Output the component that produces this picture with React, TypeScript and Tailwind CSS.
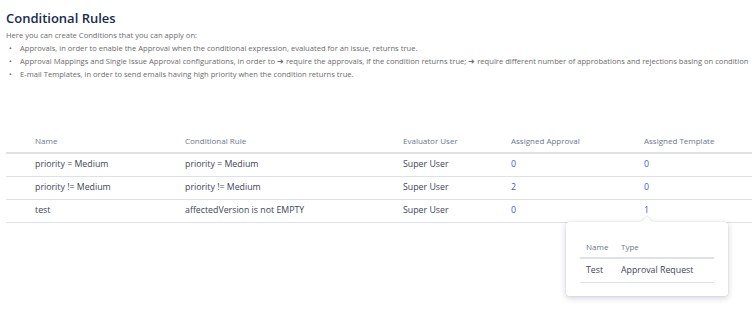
const rows = [
  { name: "priority = Medium", rule: "priority = Medium", user: "Super User", approval: "0", template: "0" },
  { name: "priority != Medium", rule: "priority != Medium", user: "Super User", approval: "2", template: "0" },
  { name: "test", rule: "affectedVersion is not EMPTY", user: "Super User", approval: "0", template: "1" },
];

const COLS = "grid grid-cols-[150px_218px_108px_133px_1fr] pl-[29px]";

export default function App() {
  return (
    <div
      className="relative h-[310px] w-[752px] overflow-hidden bg-white text-[#3d4656]"
      style={{ fontFamily: '"Open Sans", "Noto Sans", sans-serif' }}
    >
      <div className="px-[6px] pt-[8px]">
        <h1 className="text-[13px] font-semibold leading-[20px] text-[#172b4d]">Conditional Rules</h1>
        <p className="mt-[1px] text-[7.6px] leading-[13px] text-[#6b6b6b]">
          Here you can create Conditions that you can apply on:
        </p>
        <ul className="text-[7.6px] leading-[13px] text-[#6b6b6b]">
          <li className="flex whitespace-nowrap">
            <span className="w-[14px] shrink-0 pl-[3px]">•</span>
            Approvals, in order to enable the Approval when the conditional expression, evaluated for an issue, returns true.
          </li>
          <li className="flex whitespace-nowrap">
            <span className="w-[14px] shrink-0 pl-[3px]">•</span>
            Approval Mappings and Single Issue Approval configurations, in order to ➜ require the approvals, if the condition returns true; ➜ require different number of approbations and rejections basing on condition
          </li>
          <li className="flex whitespace-nowrap">
            <span className="w-[14px] shrink-0 pl-[3px]">•</span>
            E-mail Templates, in order to send emails having high priority when the condition returns true.
          </li>
        </ul>
      </div>

      <div className="ml-[6px] mt-[49px]">
        <div className={`${COLS} h-[24px] items-center border-b-2 border-[#dfe1e6] text-[8px] text-[#6b778c]`}>
          <span>Name</span>
          <span>Conditional Rule</span>
          <span>Evaluator User</span>
          <span>Assigned Approval</span>
          <span>Assigned Template</span>
        </div>
        {rows.map((r) => (
          <div key={r.name} className={`${COLS} h-[23px] items-center border-b border-[#dfe1e6] text-[8.8px]`}>
            <span>{r.name}</span>
            <span>{r.rule}</span>
            <span>{r.user}</span>
            <span className="text-[#4353f0]">{r.approval}</span>
            <span className="text-[#4353f0]">{r.template}</span>
          </div>
        ))}
      </div>

      <div className="absolute left-[566px] top-[222px] w-[162px] rounded-[3px] bg-white px-[14px] pb-[13px] pt-[15px] shadow-[0_2px_6px_rgba(9,30,66,0.2),0_0_1px_rgba(9,30,66,0.25)]">
        <div className="absolute left-[77px] top-[-4px] h-[8px] w-[8px] rotate-45 bg-white shadow-[-1px_-1px_1px_rgba(9,30,66,0.1)]" />
        <div className="grid h-[22px] grid-cols-[35px_1fr] items-center border-b-2 border-[#dfe1e6] pl-[6px] text-[8px] text-[#6b778c]">
          <span>Name</span>
          <span>Type</span>
        </div>
        <div className="grid h-[24px] grid-cols-[35px_1fr] items-center border-b border-[#dfe1e6] pl-[6px] text-[8.8px]">
          <span>Test</span>
          <span>Approval Request</span>
        </div>
      </div>
    </div>
  );
}
